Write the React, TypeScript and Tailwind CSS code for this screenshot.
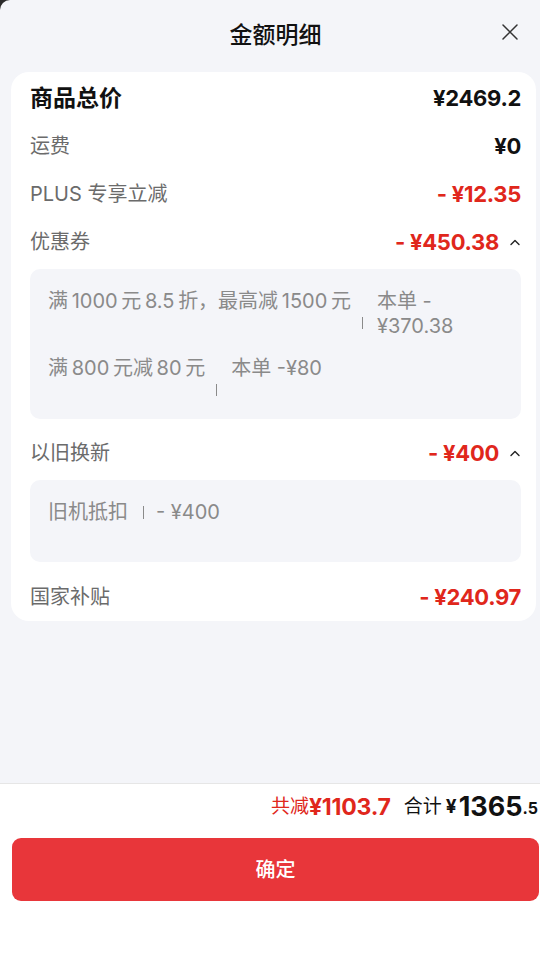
import React from "react";

const FONT = "font-['Inter','Noto_Sans_CJK_SC',sans-serif]";

function ChevronUp() {
  return (
    <svg width="12" height="8" viewBox="0 0 12 8" className="ml-[10px]">
      <path d="M2 6.5 L6 2.5 L10 6.5" fill="none" stroke="#222" strokeWidth="1.4" strokeLinecap="round" strokeLinejoin="round" />
    </svg>
  );
}

function Row({
  label,
  value,
  strong,
  red,
  chevron,
}: {
  label: string;
  value: string;
  strong?: boolean;
  red?: boolean;
  chevron?: boolean;
}) {
  const minus = value.startsWith("-");
  return (
    <div className="h-12 flex items-center justify-between">
      <span
        className={
          strong
            ? "text-[23px] font-bold text-[#111]"
            : "text-[20px] text-[#6b6b6b]"
        }
      >
        {label}
      </span>
      <div className="flex items-center">
        <span
          className={
            "text-[22px] font-bold tracking-[-0.3px] " +
            (red ? "text-[#e0271c]" : "text-[#111]")
          }
        >
          {minus ? (
            <>
              <span className="mr-[5px]">-</span>
              {value.slice(1)}
            </>
          ) : (
            value
          )}
        </span>
        {chevron && <ChevronUp />}
      </div>
    </div>
  );
}

function Sep() {
  return <span className="mt-[28px] ml-[11px] mr-[14px] h-[12px] w-[1px] bg-[#8a8a8a] shrink-0" />;
}

export default function App() {
  return (
    <div className={"w-[540px] h-[956px] bg-[#2b2b2b] " + FONT}>
      <div className="h-full flex flex-col bg-[#f4f5f9] rounded-tl-[10px] overflow-hidden">
        {/* header */}
        <div className="relative h-[70px] pl-[11px] flex items-center justify-center">
          <h1 className="text-[23px] font-medium text-[#111] mt-[1px]">金额明细</h1>
          <svg
            width="16"
            height="16"
            viewBox="0 0 16 16"
            className="absolute right-[22px] top-[24px]"
          >
            <path d="M1 1 L15 15 M15 1 L1 15" stroke="#333" strokeWidth="1.5" strokeLinecap="round" />
          </svg>
        </div>

        {/* card */}
        <div className="ml-[11px] mr-[4px] mt-[2px] bg-white rounded-[18px] pl-[19px] pr-[15px] pt-[2px]">
          <Row label="商品总价" value="¥2469.2" strong />
          <Row label="运费" value="¥0" />
          <Row label="PLUS 专享立减" value="-¥12.35" red />
          <Row label="优惠券" value="-¥450.38" red chevron />

          <div className="mt-[3px] h-[150px] bg-[#f4f5f9] rounded-[10px] pt-[20px] pl-[18px] pr-[18px] text-[20px] leading-[25px] text-[#8a8a8a] flex flex-col gap-[17px]">
            <div className="flex items-start">
              <span className="whitespace-nowrap">满{"\u2009"}1000{"\u2009"}元{"\u2009"}8.5{"\u2009"}折，最高减{"\u2009"}1500{"\u2009"}元</span>
              <Sep />
              <span>
                本单 -<br />
                ¥370.38
              </span>
            </div>
            <div className="flex items-start">
              <span className="whitespace-nowrap">满{"\u2009"}800{"\u2009"}元减{"\u2009"}80{"\u2009"}元</span>
              <Sep />
              <span>本单 -¥80</span>
            </div>
          </div>

          <div className="mt-[10px]">
            <Row label="以旧换新" value="-¥400" red chevron />
          </div>

          <div className="mt-[3px] h-[82px] bg-[#f4f5f9] rounded-[10px] pt-[20px] pl-[18px] text-[20px] leading-[25px] text-[#8a8a8a]">
            <div className="flex items-center">
              <span>旧机抵扣</span>
              <span className="ml-[15px] mr-[12px] h-[13px] w-[1px] bg-[#8a8a8a]" />
              <span>- ¥400</span>
            </div>
          </div>

          <div className="mt-[11px]">
            <Row label="国家补贴" value="-¥240.97" red />
          </div>
        </div>

        <div className="flex-1" />

        {/* footer */}
        <div className="bg-white border-t border-[#e6e6e6] h-[173px] flex flex-col">
          <div className="h-[46px] flex items-center justify-end pr-[2px]">
            <span className="text-[19px] text-[#e0271c]">共减</span>
            <span className="text-[23px] font-bold text-[#e0271c] tracking-[-0.2px]">¥1103.7</span>
            <span className="ml-[13px] text-[19px] text-[#111]">合计</span>
            <span className="ml-[4px] text-[19px] font-bold text-[#111]">¥</span>
            <span className="ml-[2px] text-[27px] font-bold text-[#111]">1365</span>
            <span className="text-[16px] font-bold text-[#111] self-end mb-[10px]">.5</span>
          </div>
          <div className="mt-[8px] ml-[12px] mr-[1px] h-[63px] rounded-[9px] bg-[#e8363a] flex items-center justify-center">
            <span className="text-white text-[20px] font-medium">确定</span>
          </div>
        </div>
      </div>
    </div>
  );
}
